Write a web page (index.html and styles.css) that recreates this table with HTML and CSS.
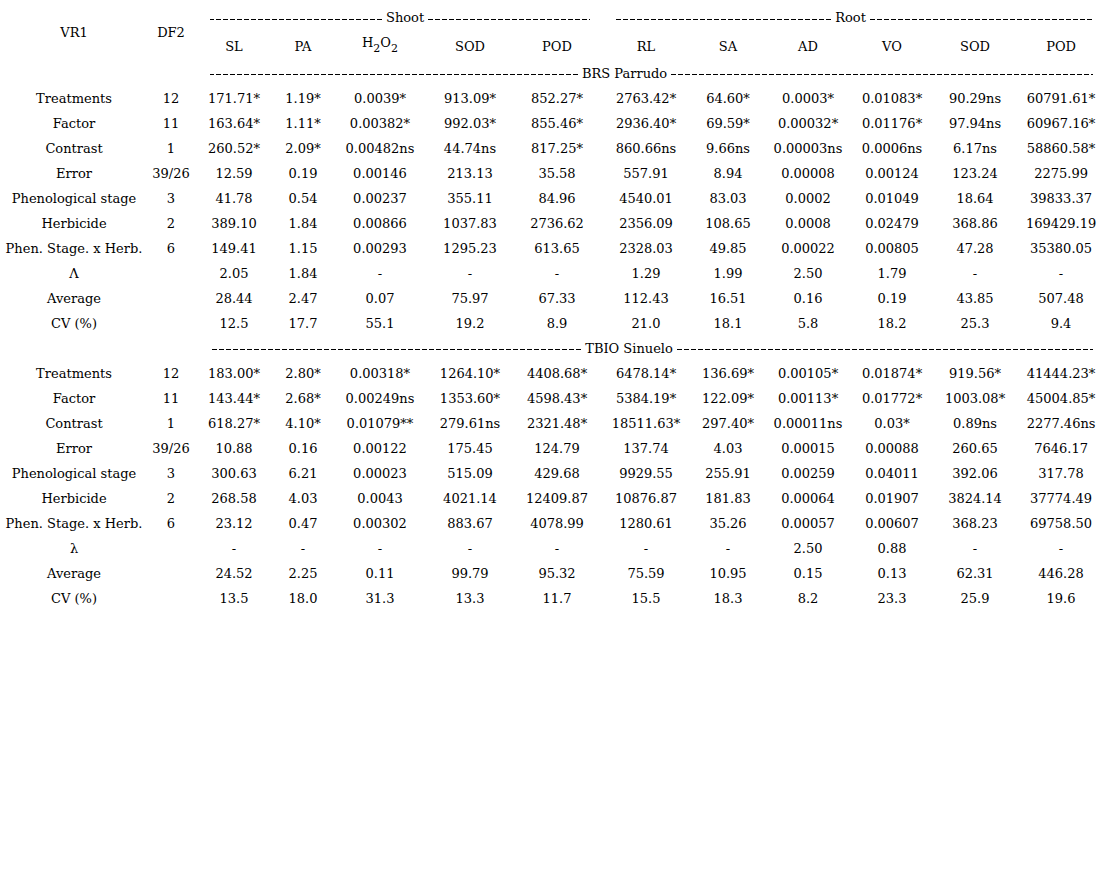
FILE: index.html
```html
<!DOCTYPE html>
<html>
<head>
<meta charset="utf-8">
<link rel="stylesheet" href="styles.css">
</head>
<body>
<table class="anova">
  <colgroup>
    <col class="c-vr"><col class="c-df"><col class="c-sl"><col class="c-pa"><col class="c-h2"><col class="c-sod"><col class="c-pod"><col class="c-rl"><col class="c-sa"><col class="c-ad"><col class="c-vo"><col class="c-rsod"><col class="c-rpod">
  </colgroup>
  <thead>
    <tr class="r-group">
      <th rowspan="2" class="vr">VR1</th>
      <th rowspan="2" class="vr">DF2</th>
      <th colspan="5" class="grp grp-shoot"><div class="rule"><span class="fill fl-shoot"></span><span class="lbl">Shoot</span><span class="fill fr-shoot"></span></div></th>
      <th colspan="6" class="grp grp-root"><div class="rule"><span class="fill fl-root"></span><span class="lbl">Root</span><span class="fill fr-root"></span></div></th>
    </tr>
    <tr class="r-vars">
      <th>SL</th><th>PA</th><th class="h2o2">H<sub>2</sub>O<sub>2</sub></th><th>SOD</th><th>POD</th><th>RL</th><th>SA</th><th>AD</th><th>VO</th><th>SOD</th><th>POD</th>
    </tr>
  </thead>
  <tbody>
    <tr class="r-sec">
      <td></td><td></td>
      <td colspan="11" class="grp grp-all"><div class="rule"><span class="fill fl-all"></span><span class="lbl">BRS Parrudo</span><span class="fill fr-all"></span></div></td>
    </tr>
    <tr><td>Treatments</td><td>12</td><td>171.71*</td><td>1.19*</td><td>0.0039*</td><td>913.09*</td><td>852.27*</td><td>2763.42*</td><td>64.60*</td><td>0.0003*</td><td>0.01083*</td><td>90.29ns</td><td>60791.61*</td></tr>
    <tr><td>Factor</td><td>11</td><td>163.64*</td><td>1.11*</td><td>0.00382*</td><td>992.03*</td><td>855.46*</td><td>2936.40*</td><td>69.59*</td><td>0.00032*</td><td>0.01176*</td><td>97.94ns</td><td>60967.16*</td></tr>
    <tr><td>Contrast</td><td>1</td><td>260.52*</td><td>2.09*</td><td>0.00482ns</td><td>44.74ns</td><td>817.25*</td><td>860.66ns</td><td>9.66ns</td><td>0.00003ns</td><td>0.0006ns</td><td>6.17ns</td><td>58860.58*</td></tr>
    <tr><td>Error</td><td>39/26</td><td>12.59</td><td>0.19</td><td>0.00146</td><td>213.13</td><td>35.58</td><td>557.91</td><td>8.94</td><td>0.00008</td><td>0.00124</td><td>123.24</td><td>2275.99</td></tr>
    <tr><td>Phenological stage</td><td>3</td><td>41.78</td><td>0.54</td><td>0.00237</td><td>355.11</td><td>84.96</td><td>4540.01</td><td>83.03</td><td>0.0002</td><td>0.01049</td><td>18.64</td><td>39833.37</td></tr>
    <tr><td>Herbicide</td><td>2</td><td>389.10</td><td>1.84</td><td>0.00866</td><td>1037.83</td><td>2736.62</td><td>2356.09</td><td>108.65</td><td>0.0008</td><td>0.02479</td><td>368.86</td><td>169429.19</td></tr>
    <tr><td>Phen. Stage. x Herb.</td><td>6</td><td>149.41</td><td>1.15</td><td>0.00293</td><td>1295.23</td><td>613.65</td><td>2328.03</td><td>49.85</td><td>0.00022</td><td>0.00805</td><td>47.28</td><td>35380.05</td></tr>
    <tr><td>Λ</td><td></td><td>2.05</td><td>1.84</td><td>-</td><td>-</td><td>-</td><td>1.29</td><td>1.99</td><td>2.50</td><td>1.79</td><td>-</td><td>-</td></tr>
    <tr><td>Average</td><td></td><td>28.44</td><td>2.47</td><td>0.07</td><td>75.97</td><td>67.33</td><td>112.43</td><td>16.51</td><td>0.16</td><td>0.19</td><td>43.85</td><td>507.48</td></tr>
    <tr><td>CV (%)</td><td></td><td>12.5</td><td>17.7</td><td>55.1</td><td>19.2</td><td>8.9</td><td>21.0</td><td>18.1</td><td>5.8</td><td>18.2</td><td>25.3</td><td>9.4</td></tr>
    <tr class="r-sec">
      <td></td><td></td>
      <td colspan="11" class="grp grp-all"><div class="rule"><span class="fill fl-all2"></span><span class="lbl">TBIO Sinuelo</span><span class="fill fr-all2"></span></div></td>
    </tr>
    <tr><td>Treatments</td><td>12</td><td>183.00*</td><td>2.80*</td><td>0.00318*</td><td>1264.10*</td><td>4408.68*</td><td>6478.14*</td><td>136.69*</td><td>0.00105*</td><td>0.01874*</td><td>919.56*</td><td>41444.23*</td></tr>
    <tr><td>Factor</td><td>11</td><td>143.44*</td><td>2.68*</td><td>0.00249ns</td><td>1353.60*</td><td>4598.43*</td><td>5384.19*</td><td>122.09*</td><td>0.00113*</td><td>0.01772*</td><td>1003.08*</td><td>45004.85*</td></tr>
    <tr><td>Contrast</td><td>1</td><td>618.27*</td><td>4.10*</td><td>0.01079**</td><td>279.61ns</td><td>2321.48*</td><td>18511.63*</td><td>297.40*</td><td>0.00011ns</td><td>0.03*</td><td>0.89ns</td><td>2277.46ns</td></tr>
    <tr><td>Error</td><td>39/26</td><td>10.88</td><td>0.16</td><td>0.00122</td><td>175.45</td><td>124.79</td><td>137.74</td><td>4.03</td><td>0.00015</td><td>0.00088</td><td>260.65</td><td>7646.17</td></tr>
    <tr><td>Phenological stage</td><td>3</td><td>300.63</td><td>6.21</td><td>0.00023</td><td>515.09</td><td>429.68</td><td>9929.55</td><td>255.91</td><td>0.00259</td><td>0.04011</td><td>392.06</td><td>317.78</td></tr>
    <tr><td>Herbicide</td><td>2</td><td>268.58</td><td>4.03</td><td>0.0043</td><td>4021.14</td><td>12409.87</td><td>10876.87</td><td>181.83</td><td>0.00064</td><td>0.01907</td><td>3824.14</td><td>37774.49</td></tr>
    <tr><td>Phen. Stage. x Herb.</td><td>6</td><td>23.12</td><td>0.47</td><td>0.00302</td><td>883.67</td><td>4078.99</td><td>1280.61</td><td>35.26</td><td>0.00057</td><td>0.00607</td><td>368.23</td><td>69758.50</td></tr>
    <tr><td>λ</td><td></td><td>-</td><td>-</td><td>-</td><td>-</td><td>-</td><td>-</td><td>-</td><td>2.50</td><td>0.88</td><td>-</td><td>-</td></tr>
    <tr><td>Average</td><td></td><td>24.52</td><td>2.25</td><td>0.11</td><td>99.79</td><td>95.32</td><td>75.59</td><td>10.95</td><td>0.15</td><td>0.13</td><td>62.31</td><td>446.28</td></tr>
    <tr><td>CV (%)</td><td></td><td>13.5</td><td>18.0</td><td>31.3</td><td>13.3</td><td>11.7</td><td>15.5</td><td>18.3</td><td>8.2</td><td>23.3</td><td>25.9</td><td>19.6</td></tr>
  </tbody>
</table>
</body>
</html>
```

FILE: styles.css
```css
html, body {
  margin: 0;
  padding: 0;
  background: #ffffff;
}

body {
  font-family: "DejaVu Serif", "Liberation Serif", serif;
  font-size: 13px;
  color: #000000;
}

.anova {
  border-collapse: collapse;
  table-layout: fixed;
  width: 1106px;
  margin-top: 4px;
}

.c-vr { width: 148px; }
.c-df { width: 46px; }
.c-sl { width: 80px; }
.c-pa { width: 58px; }
.c-h2 { width: 96px; }
.c-sod { width: 84px; }
.c-pod { width: 90px; }
.c-rl { width: 88px; }
.c-sa { width: 76px; }
.c-ad { width: 84px; }
.c-vo { width: 84px; }
.c-rsod { width: 82px; }
.c-rpod { width: 90px; }

.anova th,
.anova td {
  box-sizing: border-box;
  padding: 0;
  text-align: center;
  vertical-align: middle;
  font-weight: normal;
  white-space: nowrap;
  height: 25px;
  line-height: 16px;
}

.anova .r-group th { height: 28px; }
.anova .r-vars th { height: 29px; }
.anova .r-sec td { height: 25px; }

.anova th.h2o2 {
  vertical-align: top;
  padding-top: 3px;
}

.h2o2 sub {
  font-size: 11px;
  vertical-align: -5px;
  line-height: 0;
}

.anova .grp-shoot { padding: 0 12px 0 16px; }
.anova .grp-root { padding: 0 13px 0 13px; }
.anova .grp-all { padding: 0 13px 0 16px; }

.rule {
  display: flex;
  align-items: center;
  height: 16px;
}

.fill {
  height: 1px;
  margin-top: 2px;
  background: repeating-linear-gradient(to right, #000 0 5px, transparent 5px 7px);
}

.fl-shoot { flex: 170 1 0; background: repeating-linear-gradient(to left, #000 0 5px, transparent 5px 7px); }
.fr-shoot { flex: 160 1 0; }
.fl-root { flex: 216 1 0; background: repeating-linear-gradient(to left, #000 0 5px, transparent 5px 7px); }
.fr-root { flex: 223 1 0; }
.fl-all { flex: 368 1 0; background: repeating-linear-gradient(to left, #000 0 5px, transparent 5px 7px); }
.fr-all { flex: 422 1 0; }
.fl-all2 { flex: 371 1 0; background: repeating-linear-gradient(to left, #000 0 5px, transparent 5px 7px); }
.fr-all2 { flex: 416 1 0; }

.lbl {
  flex: none;
  padding: 0 4px;
}
```
